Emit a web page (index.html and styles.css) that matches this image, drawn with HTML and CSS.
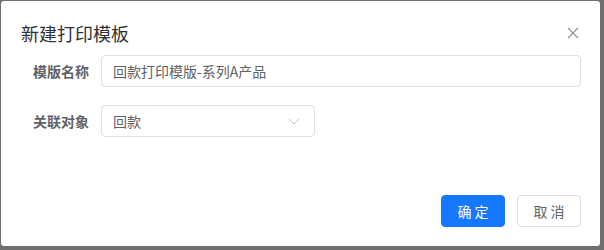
FILE: index.html
```html
<!DOCTYPE html>
<html lang="zh-CN">
<head>
    <meta charset="UTF-8">
    <meta name="viewport" content="width=device-width, initial-scale=1.0">
    <title>新建打印模板</title>
    <link rel="stylesheet" href="styles.css">
</head>
<body>
    <div class="dialog">
        <header class="dialog-header">
            <h2 class="dialog-title">新建打印模板</h2>
            <button class="dialog-close" type="button" aria-label="关闭">
                <svg width="12" height="12" viewBox="0 0 12 12">
                    <path d="M1 1 L11 11 M11 1 L1 11" stroke="#909399" stroke-width="1.2" fill="none"/>
                </svg>
            </button>
        </header>

        <form class="dialog-body">
            <div class="form-row">
                <label class="form-label" for="name">模版名称</label>
                <input class="form-input" id="name" type="text" value="回款打印模版-系列A产品">
            </div>
            <div class="form-row">
                <label class="form-label">关联对象</label>
                <div class="form-select">
                    <span>回款</span>
                    <svg width="12" height="7" viewBox="0 0 12 7">
                        <path d="M1 1 L6 6 L11 1" stroke="#c0c4cc" stroke-width="1" fill="none"/>
                    </svg>
                </div>
            </div>
        </form>

        <footer class="dialog-footer">
            <button class="btn btn-primary" type="button">确 定</button>
            <button class="btn btn-default" type="button">取 消</button>
        </footer>
    </div>
</body>
</html>
```

FILE: styles.css
```css
* {
    margin: 0;
    padding: 0;
    box-sizing: border-box;
}

body {
    width: 604px;
    height: 250px;
    background: #6f6f6f;
    font-family: "Noto Sans CJK SC", "Noto Sans", sans-serif;
    color: #606266;
    overflow: hidden;
}

.dialog {
    width: 599px;
    height: 245px;
    margin: 1px 0 0 1px;
    background: #fff;
    border-radius: 3px;
    display: flex;
    flex-direction: column;
    padding: 20px 19px 19px 20px;
}

.dialog-header {
    display: flex;
    justify-content: space-between;
    align-items: center;
    height: 24px;
}

.dialog-title {
    font-size: 18px;
    line-height: 24px;
    font-weight: normal;
    color: #303133;
}

.dialog-close {
    border: none;
    background: none;
    width: 12px;
    height: 12px;
    display: flex;
    margin-right: 2px;
}

.dialog-body {
    margin-top: 10px;
    display: flex;
    flex-direction: column;
    gap: 18px;
}

.form-row {
    display: flex;
    align-items: center;
    height: 32px;
}

.form-label {
    width: 68px;
    margin-right: 12px;
    text-align: right;
    font-size: 14px;
    font-weight: bold;
    color: #606266;
}

.form-input,
.form-select {
    height: 32px;
    border: 1px solid #dcdfe6;
    border-radius: 4px;
    padding: 0 11px;
    font-family: inherit;
    font-size: 14px;
    color: #606266;
    background: #fff;
}

.form-input {
    flex: 1;
    outline: none;
}

.form-select {
    width: 214px;
    display: flex;
    align-items: center;
    justify-content: space-between;
    padding-right: 14px;
}

.dialog-footer {
    margin-top: auto;
    display: flex;
    justify-content: flex-end;
    gap: 12px;
}

.btn {
    width: 64px;
    height: 32px;
    border-radius: 4px;
    font-family: inherit;
    font-size: 14px;
    cursor: pointer;
}

.btn-primary {
    background: #1677ff;
    border: 1px solid #1677ff;
    color: #fff;
}

.btn-default {
    background: #fff;
    border: 1px solid #dcdfe6;
    color: #606266;
}
```
